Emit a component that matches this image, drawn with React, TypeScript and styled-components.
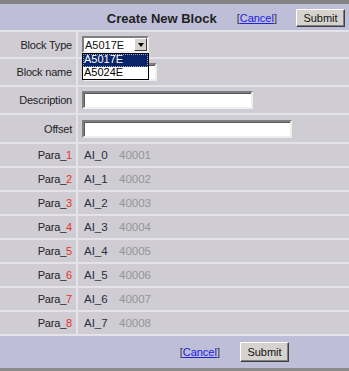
import React from 'react';
import styled, { createGlobalStyle } from 'styled-components';

const GlobalStyle = createGlobalStyle`
    html,
    body {
        margin: 0;
        padding: 0;
        background: #cfcdd3;
    }

    body {
        font-family: 'Liberation Sans', Arial, sans-serif;
        font-size: 11px;
        color: #1f1f1f;
    }
`;

const LINE = '#e4e3e8';

const Panel = styled.div`
    box-sizing: border-box;
    width: 349px;
    height: 371px;
    display: flex;
    flex-direction: column;
    background: #cfcdd3;
    border-top: 4px solid #838383;
    border-bottom: 3px solid #8a8a8a;
`;

const Bar = styled.div<{ $height: number; $right: number; $gap: number }>`
    box-sizing: border-box;
    height: ${(p) => p.$height}px;
    display: flex;
    align-items: center;
    justify-content: flex-end;
    gap: ${(p) => p.$gap}px;
    padding-right: ${(p) => p.$right}px;
    background: #bebed8;
`;

const Header = styled(Bar)`
    padding-top: 2px;
`;

const Footer = styled(Bar)`
    border-top: 2px solid ${LINE};
`;

const Title = styled.div`
    font-size: 13px;
    font-weight: bold;
    color: #222;
    margin-right: 1px;
`;

const CancelLink = styled.span`
    font-size: 11px;
    color: #333;
    white-space: nowrap;

    & > a {
        color: #2020e0;
        text-decoration: underline;
    }
`;

const Button = styled.button<{ $height: number }>`
    box-sizing: border-box;
    width: 49px;
    height: ${(p) => p.$height}px;
    padding: 0;
    font-family: 'Liberation Sans', Arial, sans-serif;
    font-size: 11px;
    color: #111;
    background: #d6d3ce;
    border: 1px solid;
    border-color: #ffffff #404040 #404040 #ffffff;
    box-shadow: inset -1px -1px #808080;
`;

const Row = styled.div<{ $height: number }>`
    box-sizing: border-box;
    height: ${(p) => p.$height}px;
    display: grid;
    grid-template-columns: 78px 1fr;
    border-top: 2px solid ${LINE};
`;

const Label = styled.div`
    box-sizing: border-box;
    display: flex;
    align-items: center;
    justify-content: flex-end;
    padding-right: 4px;
    border-right: 2px solid ${LINE};
    letter-spacing: -0.2px;
    color: #222;
    white-space: nowrap;
`;

const Num = styled.span`
    color: #e5302c;
`;

const Value = styled.div<{ $indent?: number }>`
    display: flex;
    align-items: center;
    padding-left: ${(p) => p.$indent ?? 4}px;
`;

const TextInput = styled.input<{ $width: number }>`
    box-sizing: border-box;
    width: ${(p) => p.$width}px;
    height: 18px;
    margin: 0;
    padding: 0 2px;
    background: #fff;
    border: 2px solid;
    border-color: #7f7f7f #eeeeee #eeeeee #7f7f7f;
    box-shadow: inset 1px 1px #5a5a5a;
    outline: none;
`;

const SelectWrap = styled.div`
    position: relative;
`;

const SelectBox = styled.div`
    box-sizing: border-box;
    width: 67px;
    height: 17px;
    display: flex;
    align-items: center;
    justify-content: space-between;
    padding-left: 1px;
    padding-right: 0;
    background: #fff;
    border: 2px solid;
    border-color: #7f7f7f #eeeeee #eeeeee #7f7f7f;
    font-size: 11px;
    color: #111;
`;

const SelectArrow = styled.div`
    box-sizing: border-box;
    width: 13px;
    height: 13px;
    display: flex;
    align-items: center;
    justify-content: center;
    background: #d6d3ce;
    border: 1px solid;
    border-color: #ffffff #404040 #404040 #ffffff;

    &::after {
        content: '';
        border-left: 3.5px solid transparent;
        border-right: 3.5px solid transparent;
        border-top: 4px solid #000;
    }
`;

const DropList = styled.div`
    position: absolute;
    top: 100%;
    left: 0;
    z-index: 2;
    box-sizing: border-box;
    width: 67px;
    background: #fff;
    border: 1px solid #000;
`;

const Option = styled.div<{ $active?: boolean }>`
    box-sizing: border-box;
    height: 12.5px;
    line-height: 11px;
    padding-left: 1px;
    font-size: 11px;
    color: ${(p) => (p.$active ? '#fff' : '#000')};
    background: ${(p) => (p.$active ? '#0a246a' : '#fff')};
    outline: ${(p) => (p.$active ? '1px dotted #9aa4c4' : 'none')};
    outline-offset: -1px;
`;

const Channel = styled.span`
    width: 35px;
    font-size: 11.5px;
    color: #2b2b45;
`;

const Address = styled.span`
    font-size: 11.5px;
    color: #959595;
`;

const paras = Array.from({ length: 8 }, (_, i) => ({
    n: i + 1,
    channel: `AI_${i}`,
    address: String(40001 + i),
}));

export default function App() {
    return (
        <>
            <GlobalStyle />
            <Panel>
                <Header $height={26} $right={4} $gap={19}>
                    <Title>Create New Block</Title>
                    <CancelLink>
                        [<a>Cancel</a>]
                    </CancelLink>
                    <Button $height={18}>Submit</Button>
                </Header>

                <Row $height={27}>
                    <Label>Block Type</Label>
                    <Value>
                        <SelectWrap>
                            <SelectBox>
                                A5017E
                                <SelectArrow />
                            </SelectBox>
                            <DropList>
                                <Option $active>A5017E</Option>
                                <Option>A5024E</Option>
                            </DropList>
                        </SelectWrap>
                    </Value>
                </Row>
                <Row $height={28}>
                    <Label>Block name</Label>
                    <Value>
                        <TextInput $width={75} readOnly />
                    </Value>
                </Row>
                <Row $height={28}>
                    <Label>Description</Label>
                    <Value>
                        <TextInput $width={171} readOnly />
                    </Value>
                </Row>
                <Row $height={29}>
                    <Label>Offset</Label>
                    <Value>
                        <TextInput $width={210} readOnly />
                    </Value>
                </Row>

                {paras.map((p) => (
                    <Row key={p.n} $height={24}>
                        <Label>
                            Para_<Num>{p.n}</Num>
                        </Label>
                        <Value $indent={6}>
                            <Channel>{p.channel}</Channel>
                            <Address>{p.address}</Address>
                        </Value>
                    </Row>
                ))}

                <Footer $height={34} $right={60} $gap={20}>
                    <CancelLink>
                        [<a>Cancel</a>]
                    </CancelLink>
                    <Button $height={20}>Submit</Button>
                </Footer>
            </Panel>
        </>
    );
}
